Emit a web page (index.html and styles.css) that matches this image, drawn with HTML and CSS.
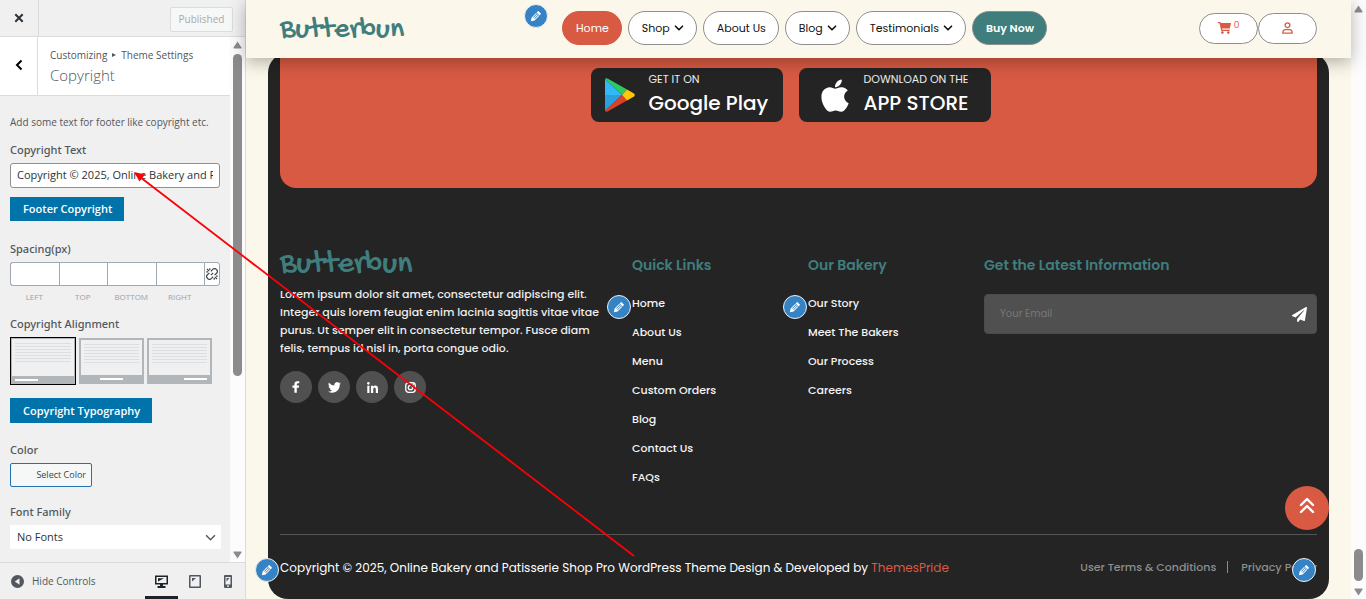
FILE: index.html
```html
<!DOCTYPE html>
<html lang="en">
<head>
<meta charset="utf-8">
<meta name="viewport" content="width=device-width, initial-scale=1">
<title>Customize: Copyright</title>
<link rel="stylesheet" href="styles.css">
</head>
<body>
<svg class="defs" aria-hidden="true">
  <symbol id="pencil" viewBox="0 0 20 20"><path fill="currentColor" d="M13.9 3.4l2.8 2.7c.4.5.4 1 0 1.5l-1.6 1.6-4.3-4.3 1.6-1.5c.5-.5 1-.5 1.5 0zM3.8 12l6.3-6.4 4.3 4.3L8 16.3 2.6 17.6zm2.8.5l5-5-.8-.8-5 5zm1.7 1.7l5-5-.8-.8-5 5z"/></symbol>
  <symbol id="chevron" viewBox="0 0 10 10"><path d="M1.5 3.2L5 6.8l3.5-3.6" fill="none" stroke="currentColor" stroke-width="1.6" stroke-linecap="round" stroke-linejoin="round"/></symbol>
</svg>

<div class="customizer">
  <aside class="sidebar">
    <header class="topbar">
      <button class="close" aria-label="Close"><svg width="10" height="10" viewBox="0 0 10 10"><path d="M1.3 1.3l7.4 7.4M8.7 1.3L1.3 8.7" stroke="#2c3338" stroke-width="2"/></svg></button>
      <button class="published" disabled>Published</button>
    </header>
    <div class="panel">
      <div class="panel-body">
        <div class="section-title">
          <button class="back" aria-label="Back"><svg width="8" height="12" viewBox="0 0 8 12"><path d="M6.5 1.5L2 6l4.5 4.5" fill="none" stroke="#000" stroke-width="2"/></svg></button>
          <div class="titles">
            <p class="crumb">Customizing <svg width="4" height="6" viewBox="0 0 4 6"><path d="M0 1l4 2-4 2z" fill="#50575e"/></svg> Theme Settings</p>
            <h1 class="section-name">Copyright</h1>
          </div>
        </div>
        <div class="controls">
          <p class="description">Add some text for footer like copyright etc.</p>
          <label class="label" for="copy-text">Copyright Text</label>
          <input class="text-input" id="copy-text" type="text" value="Copyright © 2025, Online Bakery and Patisserie Shop Pro">
          <button class="blue-button first">Footer Copyright</button>
          <p class="label">Spacing(px)</p>
          <div class="spacing">
            <div class="side"><input id="sp-left" type="text"><label for="sp-left">LEFT</label></div>
            <div class="side"><input id="sp-top" type="text"><label for="sp-top">TOP</label></div>
            <div class="side"><input id="sp-bottom" type="text"><label for="sp-bottom">BOTTOM</label></div>
            <div class="side"><input id="sp-right" type="text"><label for="sp-right">RIGHT</label></div>
            <button class="unlink" aria-label="Link values"><svg width="12" height="12" viewBox="0 0 12 12" fill="none" stroke="#3c434a" stroke-width="1.2"><path d="M4.800 3.400L7 1.200a2.100 2.100 0 0 1 3 0l.800.800a2.100 2.100 0 0 1 0 3L8.600 7.200M7.200 8.600L5 10.800a2.100 2.100 0 0 1-3 0L1.200 10a2.100 2.100 0 0 1 0-3l2.200-2.200M1 1l2.200 2.200M8.800 8.800L11 11M3.800.300v1.700M.300 3.800h1.700M8.200 11.700V10M11.700 8.200H10M4.800 7.200l2.400-2.400"/></svg></button>
          </div>
          <p class="label">Copyright Alignment</p>
          <div class="alignments">
            <button class="align selected" aria-label="Left"><span class="lines"></span><span class="strip left"><i></i></span></button>
            <button class="align" aria-label="Center"><span class="lines"></span><span class="strip center"><i></i></span></button>
            <button class="align" aria-label="Right"><span class="lines"></span><span class="strip right"><i></i></span></button>
          </div>
          <button class="blue-button second">Copyright Typography</button>
          <p class="label">Color</p>
          <button class="color-button">Select Color</button>
          <label class="label" for="font">Font Family</label>
          <div class="select-wrap">
            <select id="font"><option>No Fonts</option></select>
            <svg width="11" height="11" viewBox="0 0 10 10"><path d="M1 3l4 4 4-4" fill="none" stroke="#50575e" stroke-width="1.3"/></svg>
          </div>
        </div>
      </div>
      <div class="scrollbar side-scroll">
        <svg width="9" height="8" viewBox="0 0 9 8"><path d="M4.500.500L8.500 6.500Q8.800 7.500 8 7.500H1Q.2 7.500.5 6.500z" fill="#8b8b8b"/></svg>
        <span class="thumb"></span>
        <svg class="down" width="9" height="8" viewBox="0 0 9 8"><path d="M4.500 7.500L.5 1.500Q.2.500 1 .500H8Q8.800.500 8.500 1.500z" fill="#8b8b8b"/></svg>
      </div>
    </div>
    <footer class="bottombar">
      <button class="hide-controls"><svg width="13" height="13" viewBox="0 0 13 13"><circle cx="6.500" cy="6.500" r="6.500" fill="#50575e"/><path d="M8.500 3.300v6.400L3.800 6.500z" fill="#f0f0f0"/></svg>Hide Controls</button>
      <div class="devices">
        <button class="device active" aria-label="Desktop"><svg width="13" height="13" viewBox="0 0 13 13"><path d="M0 .5h13v9H8v1.500h2.500V13h-8v-2H5V9.500H0zM1.500 2v6h10V2z" fill="#1d2327" fill-rule="evenodd"/><path d="M3 3.300h6L3 6.500z" fill="#1d2327"/></svg></button>
        <button class="device" aria-label="Tablet"><svg width="12" height="13" viewBox="0 0 12 13"><path d="M1 0h10q1 0 1 1v11q0 1-1 1H1q-1 0-1-1V1q0-1 1-1zM1.500 1.500v10h9v-10z" fill="#50575e" fill-rule="evenodd"/><path d="M3 3h4L3 6.500z" fill="#50575e"/></svg></button>
        <button class="device" aria-label="Mobile"><svg width="8" height="13" viewBox="0 0 8 13"><path d="M1 0h6q1 0 1 1v11q0 1-1 1H1q-1 0-1-1V1q0-1 1-1zM1.500 2v7.500h5V2zM3 10.500v1.300h2v-1.300z" fill="#50575e" fill-rule="evenodd"/><path d="M2.500 3h3l-3 3.500z" fill="#50575e"/></svg></button>
      </div>
    </footer>
  </aside>

  <main class="preview">
    <header class="site-header">
      <a class="logo" href="#">Butterbun</a>
      <nav class="nav">
        <button class="edit edit-nav" aria-label="Edit menu"><svg><use href="#pencil"/></svg></button>
        <a class="pill home" href="#">Home</a>
        <a class="pill" href="#">Shop <svg><use href="#chevron"/></svg></a>
        <a class="pill" href="#">About Us</a>
        <a class="pill" href="#">Blog <svg><use href="#chevron"/></svg></a>
        <a class="pill" href="#">Testimonials <svg><use href="#chevron"/></svg></a>
        <a class="pill buy" href="#">Buy Now</a>
      </nav>
      <div class="actions">
        <a class="action" href="#" aria-label="Cart"><svg width="13" height="12" viewBox="0 0 13 12"><path d="M0 0h2.300l.5 1H13l-1.200 5.600H4l.3 1.200h7.400v1.200H3.300L1.500 1.200H0z" fill="#d95a43"/><circle cx="4.400" cy="10.600" r="1.300" fill="#d95a43"/><circle cx="10.300" cy="10.600" r="1.300" fill="#d95a43"/></svg><sup>0</sup></a>
        <a class="action" href="#" aria-label="Account"><svg width="11" height="12" viewBox="0 0 11 12" fill="none" stroke="#d95a43" stroke-width="1.300"><circle cx="5.500" cy="3.200" r="2.400"/><path d="M.8 11.200q0-3.500 2.700-3.500h4q2.700 0 2.700 3.500z"/></svg></a>
      </div>
    </header>

    <div class="site-footer">
      <section class="promo">
        <a class="store" href="#">
          <svg width="30" height="34" viewBox="0 0 30 34"><path d="M0 1v16h17z" fill="#32b7f7"/><path d="M0 17v16l17-16z" fill="#2b9fdb"/><path d="M0 1q1-1.500 3-.300L22 11.500 17 17z" fill="#2bcb63"/><path d="M0 33q1 1.500 3 .300L22 22.500 17 17z" fill="#d9412a"/><path d="M22 11.500l7 4q1.500 1.500 0 3l-7 4-5-5.500z" fill="#fcc70c"/></svg>
          <span class="store-text"><small>GET IT ON</small><b>Google Play</b></span>
        </a>
        <a class="store apple" href="#">
          <svg width="28" height="34" viewBox="0 0 384 470"><path fill="#fff" d="M318.700 268.700c-.2-36.700 16.400-64.400 50-84.800-18.800-26.900-47.200-41.700-84.700-44.600-35.500-2.800-74.300 20.700-88.500 20.700-15 0-49.400-19.700-76.400-19.700C63.300 141.200 4 184.800 4 273.500q0 39.300 14.400 81.200c12.800 36.700 59 126.700 107.200 125.200 25.200-.6 43-17.900 75.800-17.900 31.800 0 48.300 17.900 76.400 17.900 48.600-.7 90.400-82.500 102.600-119.300-65.200-30.700-61.700-90-61.700-91.900zM262 104.500c27.300-32.400 24.800-61.900 24-72.500-24.100 1.400-52 16.400-67.900 34.900-17.500 19.800-27.800 44.300-25.600 71.900 26.100 2 49.900-11.400 69.500-34.300z" transform="translate(0 -12)"/></svg>
          <span class="store-text"><small>DOWNLOAD ON THE</small><b>APP STORE</b></span>
        </a>
      </section>

      <section class="columns">
        <div class="about">
          <a class="logo large" href="#">Butterbun</a>
          <p>Lorem ipsum dolor sit amet, consectetur adipiscing elit.<br>Integer quis lorem feugiat enim lacinia sagittis vitae vitae<br>purus. Ut semper elit in consectetur tempor. Fusce diam<br>felis, tempus id nisl in, porta congue odio.</p>
          <div class="social">
            <a href="#" aria-label="Facebook"><svg width="8" height="12" viewBox="0 0 9 13"><path d="M2.700 13V7.300H.5V4.900h2.200V3.400Q2.700 0 6 0h2.200v2.300H6.800Q5.400 2.300 5.400 3.500v1.400H8L7.600 7.300H5.400V13z"/></svg></a>
            <a href="#" aria-label="Twitter"><svg width="13" height="11" viewBox="0 0 24 20"><path d="M24 2.400a10 10 0 0 1-2.800.8A5 5 0 0 0 23.300.500a10 10 0 0 1-3.100 1.200 4.900 4.900 0 0 0-8.400 4.500A14 14 0 0 1 1.700 1a4.900 4.900 0 0 0 1.500 6.600A5 5 0 0 1 1 7a5 5 0 0 0 4 4.900 5 5 0 0 1-2.300.1 5 5 0 0 0 4.600 3.400A10 10 0 0 1 0 17.500 14 14 0 0 0 21.500 5z"/></svg></a>
            <a href="#" aria-label="LinkedIn"><svg width="11" height="11" viewBox="0 0 12 12"><path d="M.3 4h2.400v8H.3zM1.500 0a1.400 1.400 0 1 1 0 2.900 1.400 1.400 0 0 1 0-2.900zM4.300 4h2.300v1.100Q7.300 3.800 9 3.800q3 0 3 3.500V12H9.600V7.900q0-2-1.300-2-1.500 0-1.500 2V12H4.300z"/></svg></a>
            <a href="#" aria-label="Instagram"><svg width="11" height="11" viewBox="0 0 12 12"><rect x=".8" y=".8" width="10.400" height="10.400" rx="3" fill="none" stroke="#fff" stroke-width="1.400"/><circle cx="6" cy="6" r="2.400" fill="none" stroke="#fff" stroke-width="1.400"/><circle cx="9" cy="3" r=".8"/></svg></a>
          </div>
        </div>
        <div class="links">
          <h2>Quick Links</h2>
          <ul>
            <li><a href="#">Home</a></li><li><a href="#">About Us</a></li><li><a href="#">Menu</a></li><li><a href="#">Custom Orders</a></li><li><a href="#">Blog</a></li><li><a href="#">Contact Us</a></li><li><a href="#">FAQs</a></li>
          </ul>
          <button class="edit edit-links" aria-label="Edit quick links"><svg><use href="#pencil"/></svg></button>
        </div>
        <div class="links">
          <h2>Our Bakery</h2>
          <ul>
            <li><a href="#">Our Story</a></li><li><a href="#">Meet The Bakers</a></li><li><a href="#">Our Process</a></li><li><a href="#">Careers</a></li>
          </ul>
          <button class="edit edit-links" aria-label="Edit our bakery"><svg><use href="#pencil"/></svg></button>
        </div>
        <div class="links">
          <h2>Get the Latest Information</h2>
          <form class="subscribe">
            <input type="email" placeholder="Your Email" aria-label="Your Email">
            <button type="button" aria-label="Send"><svg width="15" height="15" viewBox="0 0 512 512"><path fill="#fff" d="M476 3L12 271c-18 10-16 36 2 43l107 45L409 105c6-5 13 3 9 8L176 407v81c0 24 28 33 42 16l64-78 125 53c14 6 31-3 33-19L512 28c3-20-19-35-36-25z"/></svg></button>
          </form>
        </div>
      </section>

      <section class="legal">
        <button class="edit edit-copy" aria-label="Edit copyright"><svg><use href="#pencil"/></svg></button>
        <p>Copyright © 2025, Online Bakery and Patisserie Shop Pro WordPress Theme Design &amp; Developed by <a href="#">ThemesPride</a></p>
        <nav class="terms"><a href="#">User Terms &amp; Conditions</a><a href="#">Privacy Policy</a></nav>
        <button class="edit edit-terms" aria-label="Edit terms"><svg><use href="#pencil"/></svg></button>
      </section>
    </div>
    <a class="to-top" href="#" aria-label="Back to top"><svg width="16" height="18" viewBox="0 0 16 18"><path d="M2 8l6-6 6 6M2 15l6-6 6 6" fill="none" stroke="#fff" stroke-width="2.400" stroke-linecap="round" stroke-linejoin="round"/></svg></a>
  </main>

  <div class="scrollbar page-scroll">
    <svg width="9" height="8" viewBox="0 0 9 8"><path d="M4.500.500L8.500 6.500Q8.800 7.500 8 7.500H1Q.2 7.500.5 6.500z" fill="#8b8b8b"/></svg>
    <span class="thumb"></span>
    <svg width="9" height="8" viewBox="0 0 9 8"><path d="M4.500 7.500L.5 1.500Q.2.500 1 .500H8Q8.800.500 8.500 1.500z" fill="#8b8b8b"/></svg>
  </div>

  <svg class="arrow" width="504" height="390" viewBox="132 168 504 390" aria-hidden="true"><path d="M634 556L140 177" stroke="#fb0007" stroke-width="1.800"/><path d="M134 172l11 2.500-5.500 7z" fill="#fb0007"/></svg>
</div>
</body>
</html>
```

FILE: styles.css
```css
* { box-sizing: border-box; }
body { margin: 0; font-family: "Open Sans", "Noto Sans", sans-serif; color: #3c434a; }
p, h1, h2, ul { margin: 0; padding: 0; font-weight: 400; }
ul { list-style: none; }
a { color: inherit; text-decoration: none; }
button { font: inherit; color: inherit; padding: 0; border: 0; background: none; }
input, select { font: inherit; margin: 0; }
svg { display: block; flex: none; }
.defs { position: absolute; width: 0; height: 0; }

.customizer { position: relative; display: flex; min-height: 100vh; overflow: hidden; }

/* Sidebar */
.sidebar { flex: none; width: 246px; display: flex; flex-direction: column; background: #f0f0f0; border-right: 1px solid #dcdcde; }
.topbar { display: flex; align-items: stretch; justify-content: space-between; height: 37px; border-bottom: 1px solid #dcdcde; }
.close { width: 39px; display: grid; place-items: center; border-right: 1px solid #dcdcde; }
.published { align-self: center; margin: 2px 12px 0 0; height: 25px; width: 63px; font-size: 10px; color: #a7aaad; background: #f6f7f7; border: 1px solid #dcdcde; border-radius: 2px; }
.panel { flex: 1; display: flex; }
.panel-body { flex: 1; }
.section-title { display: flex; height: 59px; background: #fff; border-bottom: 1px solid #dcdcde; }
.back { width: 38px; display: grid; place-items: center; padding-bottom: 2px; border-right: 1px solid #dcdcde; }
.titles { padding: 10px 0 0 12px; color: #50575e; }
.crumb { display: flex; align-items: center; gap: 5px; font-size: 10px; line-height: 16px; white-space: nowrap; }
.section-name { font-size: 15px; line-height: 24px; font-weight: 300; }
.controls { display: flex; flex-direction: column; align-items: flex-start; padding: 19px 9px 12px 10px; }
.description { font-size: 10px; line-height: 14px; margin-bottom: 13px; white-space: nowrap; color: #50575e; }
.label { font-family: "Noto Sans", sans-serif; font-size: 11px; line-height: 16px; margin-bottom: 5px; font-weight: 500; color: #50575e; }
.text-input { width: 210px; height: 25px; padding: 0 6px 2px; font-size: 11px; color: #2c3338; background: #fff; border: 1px solid #8c8f94; border-radius: 3px; }
.blue-button { padding: 0 12px 1px 13px; font-size: 11px; font-weight: 600; color: #fff; background: #0073aa; }
.first { height: 24px; margin: 9px 0 20px; }
.second { height: 25px; margin: 13px 0 19px; }
.spacing { display: flex; width: 210px; margin-bottom: 13px; }
.side { flex: 1; text-align: center; }
.side input { display: block; width: 100%; height: 24px; background: #fff; border: 1px solid #a0a9b2; border-right: 0; }
.side:first-child input { border-radius: 3px 0 0 3px; }
.side label { display: block; margin-top: 5px; font-size: 8px; line-height: 12px; color: #a0a0a0; }
.unlink { width: 16px; height: 24px; display: grid; place-items: center; background: #fff; border: 1px solid #a0a9b2; border-radius: 0 3px 3px 0; }
.alignments { display: flex; align-items: center; gap: 3px; }
.align { width: 65px; height: 46px; display: flex; flex-direction: column; border: 1px solid #b0b6b9; background: #f0f0f0; }
.align.selected { width: 66px; height: 48px; border-color: #000; }
.lines { flex: 1; width: 100%; border: 1px solid #b0b6b9; border-bottom: 0; padding: 4px 3px 12px; background: repeating-linear-gradient(#dcdfe1 0 1px, transparent 1px 3px) content-box; }
.strip { width: 100%; height: 8px; padding: 0 4px; display: flex; align-items: center; background: #b0b6b9; }
.strip i { width: 23px; height: 2px; background: #fff; }
.strip.center { justify-content: center; }
.strip.right { justify-content: flex-end; }
.color-button { width: 82px; height: 24px; padding: 0 5px 2px 0; margin-bottom: 17px; text-align: right; font-size: 9px; background: #f6f7f7; border: 1px solid #2271b1; border-radius: 2px; }
.select-wrap { display: grid; width: 100%; align-items: center; }
.select-wrap > * { grid-area: 1 / 1; }
.select-wrap svg { justify-self: end; margin-right: 5px; pointer-events: none; }
.select-wrap select { width: 100%; height: 24px; padding: 0 7px 1px; font-size: 11px; color: #2c3338; background: #fff; border: 0; appearance: none; }

.scrollbar { flex: none; width: 15px; display: flex; flex-direction: column; align-items: center; background: #fcfcfc; }
.thumb { width: 9px; border-radius: 5px; background: #8b8b8b; }
.side-scroll { padding: 4px 0 3px; }
.side-scroll .thumb { height: 322px; margin-top: 5px; }
.side-scroll .down { margin-top: auto; }
.page-scroll { padding: 5px 0 3px; }
.page-scroll .thumb { height: 32px; margin: auto 0 7px; }

.bottombar { display: flex; justify-content: space-between; height: 37px; padding: 0 1px 0 11px; border-top: 1px solid #dcdcde; }
.hide-controls { display: flex; align-items: center; gap: 8px; font-size: 10px; color: #50575e; }
.devices { display: flex; }
.device { width: 33px; display: grid; place-items: center; border-bottom: 3px solid transparent; padding-top: 4px; }
.device.active { border-color: #1d2327; }

/* Site preview */
.preview { position: relative; flex: 1; min-width: 0; padding: 53px 22px 0; display: flex; background: #fbf7ea; font-family: Poppins, Inter, "Open Sans", sans-serif; }
.site-header { position: absolute; z-index: 2; top: 0; left: 0; right: 0; height: 58px; padding: 0 34px; display: flex; align-items: center; justify-content: space-between; background: #fbf7ea; box-shadow: 0 4px 16px rgba(0, 0, 0, .3); }
.logo { width: 130px; padding-top: 4px; font-family: "Gochi Hand", "Comic Neue", "Comic Sans MS", Lato, sans-serif; font-size: 30px; line-height: 30px; font-weight: 400; color: #407e7e; }
.nav { position: relative; display: flex; gap: 6px; font-size: 11px; font-weight: 400; color: #111; margin-top: -2px; }
.pill { display: flex; align-items: center; gap: 4px; height: 34px; padding: 0 12px 0 13px; border: 1px solid #8e8e8e; border-radius: 17px; background: #fff; white-space: nowrap; }
.pill svg { width: 10px; height: 10px; }
.home { color: #fff; background: #d95a43; border-color: #d95a43; }
.buy { color: #fff; background: #407e7e; font-weight: 600; }
.actions { display: flex; }
.action { display: flex; align-items: center; justify-content: center; gap: 3px; width: 59px; height: 31px; margin-bottom: 2px; border: 1px solid #8e8e8e; border-radius: 16px; background: #fff; color: #d95a43; }
.action sup { padding-bottom: 6px; font-size: 9px; line-height: 12px; }

.edit { position: absolute; z-index: 3; width: 24px; height: 24px; display: grid; place-items: center; color: #fff; background: #3582c4; border: 1px solid #f0f0f1; border-radius: 50%; }
.edit svg { width: 14px; height: 14px; }
.edit-nav { left: -38px; top: -7px; }
.edit-links { left: -25px; top: 47px; }
.edit-copy { left: -25px; bottom: 17px; }
.edit-terms { right: 1px; bottom: 17px; }

.site-footer { flex: 1; display: flex; flex-direction: column; padding: 0 12px; border-radius: 20px; background: #242424; color: #fff; }
.promo { display: flex; justify-content: center; padding: 15px 0 66px; border-radius: 0 0 16px 16px; background: #d95a43; }
.store { display: flex; align-items: center; gap: 14px; width: 192px; height: 54px; padding-left: 14px; margin-right: 16px; border-radius: 8px; background: #242424; }
.apple { padding-left: 22px; gap: 15px; }
.store-text { display: flex; flex-direction: column; white-space: nowrap; }
.store-text small { font-size: 11px; line-height: 15px; color: #eee; }
.store-text b { font-size: 20px; line-height: 32px; font-weight: 500; }

.columns { display: grid; grid-template-columns: 328fr 152fr 152fr 333fr; gap: 24px; padding-top: 60px; font-size: 11px; font-weight: 500; }
.about .logo { display: block; padding-top: 2px; margin-bottom: 5px; }
.about p { line-height: 18px; font-weight: 500; color: #eee; white-space: nowrap; }
.about .large { font-size: 32px; }
.social { display: flex; gap: 6px; margin-top: 14px; }
.social a { width: 32px; height: 32px; display: grid; place-items: center; border-radius: 50%; background: #505050; }
.social svg { fill: #fff; }
.links { position: relative; padding-top: 5px; white-space: nowrap; }
.links h2 { font-size: 14px; line-height: 24px; font-weight: 600; color: #407e7e; }
.links ul { margin-top: 12px; line-height: 29px; font-weight: 500; color: #f4f4f4; }
.subscribe { display: flex; align-items: center; height: 40px; margin-top: 17px; padding-right: 9px; border: 1px solid #484b50; border-radius: 4px; background: #505050; }
.subscribe input { flex: 1; min-width: 0; padding: 0 15px; font-size: 10px; font-weight: 400; color: #fff; background: none; border: 0; }
.subscribe input::placeholder { color: #787878; }

.legal { position: relative; display: flex; align-items: center; justify-content: space-between; height: 65px; margin-top: auto; border-top: 1px solid #555; font-size: 12px; white-space: nowrap; }
.legal p { padding-top: 1px; }
.legal p a { color: #d95a43; }
.terms { display: flex; color: #8e8e8e; font-size: 11px; font-weight: 500; }
.terms a + a { margin-left: 11px; padding-left: 13px; border-left: 1px solid #8e8e8e; line-height: 12px; }
.terms a { line-height: 12px; }
.to-top { position: absolute; z-index: 2; right: 22px; bottom: 69px; width: 44px; height: 44px; display: grid; place-items: center; padding-bottom: 4px; border-radius: 50%; background: #d95a43; }

.arrow { position: absolute; z-index: 5; left: 132px; top: 168px; pointer-events: none; }
```
